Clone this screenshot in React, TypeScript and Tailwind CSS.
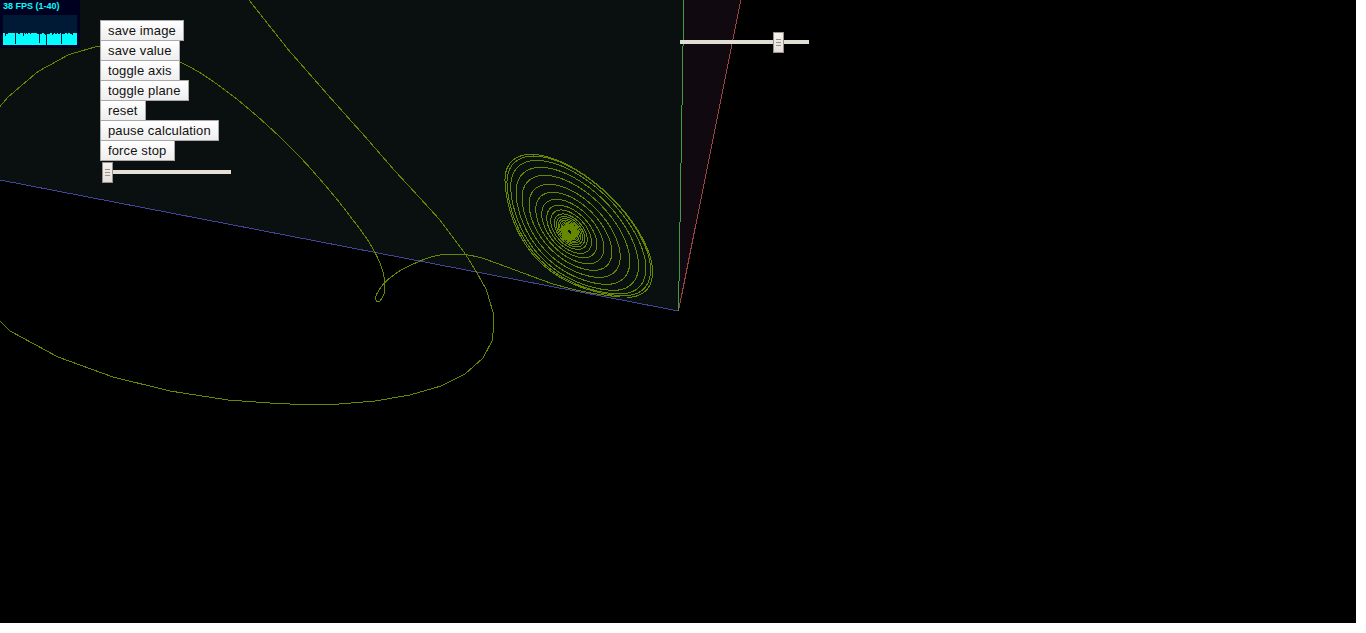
const OLIVE = '#668800';

const BUTTONS = [
  { label: 'save image', width: 'w-[84px]' },
  { label: 'save value', width: 'w-[80px]' },
  { label: 'toggle axis', width: 'w-[80px]' },
  { label: 'toggle plane', width: 'w-[89px]' },
  { label: 'reset', width: 'w-[46px]' },
  { label: 'pause calculation', width: 'w-[119px]' },
  { label: 'force stop', width: 'w-[75px]' },
];

// Extents of successive turns of the attractor, in thirds of a pixel.
const TOP = [28, 33, 46, 67, 91, 118, 142, 163, 181, 195, 207];
const RIGHT = [472, 466, 452, 430, 404, 375, 350, 326, 305, 289, 276];
const BOTTOM = [457, 452, 447, 436, 418, 397, 376, 356, 338, 325, 313];
const LEFT = [29, 35, 46, 62, 80, 101, 121, 139, 154, 166, 177];

function extent(values: number[], centre: number, turn: number) {
  const t = Math.max(0, turn);
  const last = values.length - 1;
  if (t >= last) return centre + (values[last] - centre) * Math.pow(0.86, t - last);
  const i = Math.floor(t);
  return values[i] + (values[i + 1] - values[i]) * (t - i);
}

function spiral() {
  const points: string[] = [];
  for (let a = 0; a < 24 * Math.PI * 2; a += Math.PI / 36) {
    const turn = a / (Math.PI * 2);
    const phase = 0.86 + 0.022 * Math.min(turn, 10);
    const u = phase - a;
    const top = extent(TOP, 260, turn - 0.5);
    const right = extent(RIGHT, 222, turn - 0.14);
    const bottom = extent(BOTTOM, 260, turn);
    const left = extent(LEFT, 222, turn - 0.64);
    const wrapped = ((u % (Math.PI * 2)) + Math.PI * 2) % (Math.PI * 2);
    let bulge = 0;
    if (wrapped > phase && wrapped < Math.PI) {
      const s = Math.sin(((wrapped - phase) / (Math.PI - phase)) * Math.PI);
      bulge = 0.11 * s * s * Math.max(0.1, 1 - turn / 7);
    }
    const x = (left + right) / 2 + ((right - left) / 2) * (Math.cos(u) - bulge);
    const y = (top + bottom) / 2 + ((bottom - top) / 2) * (Math.cos(a) + bulge);
    points.push((495.3 + x / 3).toFixed(2) + ',' + (145 + y / 3).toFixed(2));
  }
  return points.join(' ');
}

// Catmull-Rom curve through a list of points, written as cubic Béziers.
function smooth(points: number[][]) {
  let d = 'M' + points[0].join(' ');
  for (let i = 0; i < points.length - 1; i++) {
    const p0 = points[Math.max(0, i - 1)];
    const p1 = points[i];
    const p2 = points[i + 1];
    const p3 = points[Math.min(points.length - 1, i + 2)];
    d +=
      'C' +
      [
        p1[0] + (p2[0] - p0[0]) / 6,
        p1[1] + (p2[1] - p0[1]) / 6,
        p2[0] - (p3[0] - p1[0]) / 6,
        p2[1] - (p3[1] - p1[1]) / 6,
        p2[0],
        p2[1],
      ]
        .map((n) => n.toFixed(2))
        .join(' ');
  }
  return d;
}

const SPIRAL = spiral();

const LOOP = smooth([
  [158, 52], [180, 62], [202, 74], [233, 96], [267, 125], [300, 157], [333, 194.5],
  [353, 220], [367, 239], [375.5, 253.5], [381.5, 267], [384.5, 280], [384.5, 292],
  [381.5, 299], [378, 301.8], [375.7, 299.5], [376.5, 294.5], [383, 284.5], [393, 275.5],
  [403, 269], [420, 261], [433, 256.5], [444, 254.5], [464, 254.5], [480, 257.5],
  [496, 263], [515, 270], [536.5, 278], [555, 284.5], [578.5, 290.5], [600, 294.5], [620, 297],
]);

function Scene() {
  return (
    <svg width="1356" height="623" viewBox="0 0 1356 623" shapeRendering="crispEdges" className="block">
      <path d="M0 0H683.5L678.5 311L0 180Z" fill="#0a1010" />
      <path d="M683.5 0H740.5L678.5 311Z" fill="#100a10" />
      <g fill="none" strokeWidth="1">
        <path d="M0 180L678.5 311" stroke="#444499" />
        <path d="M740.8 0L678.5 311" stroke="#994444" />
        <path d="M683.8 0L678.5 311" stroke="#449944" />
        <polyline
          stroke={OLIVE}
          points="249,0 288.5,50 331.5,99 365,136.5 395,171 420,198 440,220 466,255 477,273 486.5,290 493.5,314 493.5,326 492.5,340 483,358 465,374 441,386 410,395 375,401 333,404.5 300,404.5 270,403 228,400 170,391 113,377 58,357 10,331 0,321"
        />
        <polyline stroke={OLIVE} points="0,106.5 8,97 38,71.5 69,54.5 95,47 104,45.5 130,46 158,52" />
        <path stroke={OLIVE} d={LOOP} />
        <polyline stroke={OLIVE} points={SPIRAL} />
      </g>
    </svg>
  );
}

function FpsMeter() {
  return (
    <div className="absolute left-0 top-0 h-12 w-20 bg-[#000020] px-[3px]">
      <div className="h-[15px] whitespace-nowrap font-['Liberation_Sans',sans-serif] text-[9px] font-bold leading-[13px] text-[#00ffff]">
        38 FPS (1-40)
      </div>
      <svg width="74" height="30" shapeRendering="crispEdges" className="block">
        <rect width="74" height="30" fill="#001a35" />
        <path
          fill="#00ffff"
          d="M0 30V18H2V21H3V19H5V18H12V29H13V18H15V19H17V18H20V21H21V18H22V19H23V18H24V19H25V18H27V19H28V18H34V19H36V28H37V19H39V18H41V19H42V20H43V30H44V19H47V18H49V20H50V19H51V18H52V19H54V18H55V19H57V18H58V29H59V19H62V18H64V19H65V18H67V19H69V20H70V18H74V30Z"
        />
      </svg>
    </div>
  );
}

function Slider({ thumb, track }: { thumb: string; track: string }) {
  return (
    <div className="relative h-[21px] w-[129px] pt-2">
      <div className={'h-1 w-full ' + track} />
      <div
        className={
          'absolute top-0 flex h-[21px] w-[11px] flex-col items-center justify-center gap-[2px] border border-[#98918a] bg-linear-to-b from-[#f5f1ed] to-[#e6deda] ' +
          thumb
        }
      >
        <span className="h-px w-[5px] bg-[#98918a]" />
        <span className="h-px w-[5px] bg-[#98918a]" />
        <span className="h-px w-[5px] bg-[#98918a]" />
      </div>
    </div>
  );
}

export default function App() {
  return (
    <div className="h-[633px] w-full overflow-hidden bg-white">
      <main className="relative h-[623px] w-[1356px] overflow-hidden bg-black">
        <Scene />
        <FpsMeter />
        <div className="absolute left-[100px] top-5 flex flex-col items-start font-['Liberation_Sans',sans-serif]">
          {BUTTONS.map((button) => (
            <button
              key={button.label}
              className={
                '-mb-px h-[21px] whitespace-nowrap border border-[#a9a9a9] bg-linear-to-b from-white to-[#eeeeee] pl-[7px] text-left text-[13px] leading-[19px] tracking-[0.14px] text-[#111111] ' +
                button.width
              }
            >
              {button.label}
            </button>
          ))}
          <div className="ml-[2px] mt-[2px]">
            <Slider thumb="left-0" track="bg-[#e5e0d8]" />
          </div>
        </div>
        <div className="absolute left-[680px] top-8">
          <Slider thumb="left-[93px]" track="bg-[#e1ded3]" />
        </div>
      </main>
    </div>
  );
}
